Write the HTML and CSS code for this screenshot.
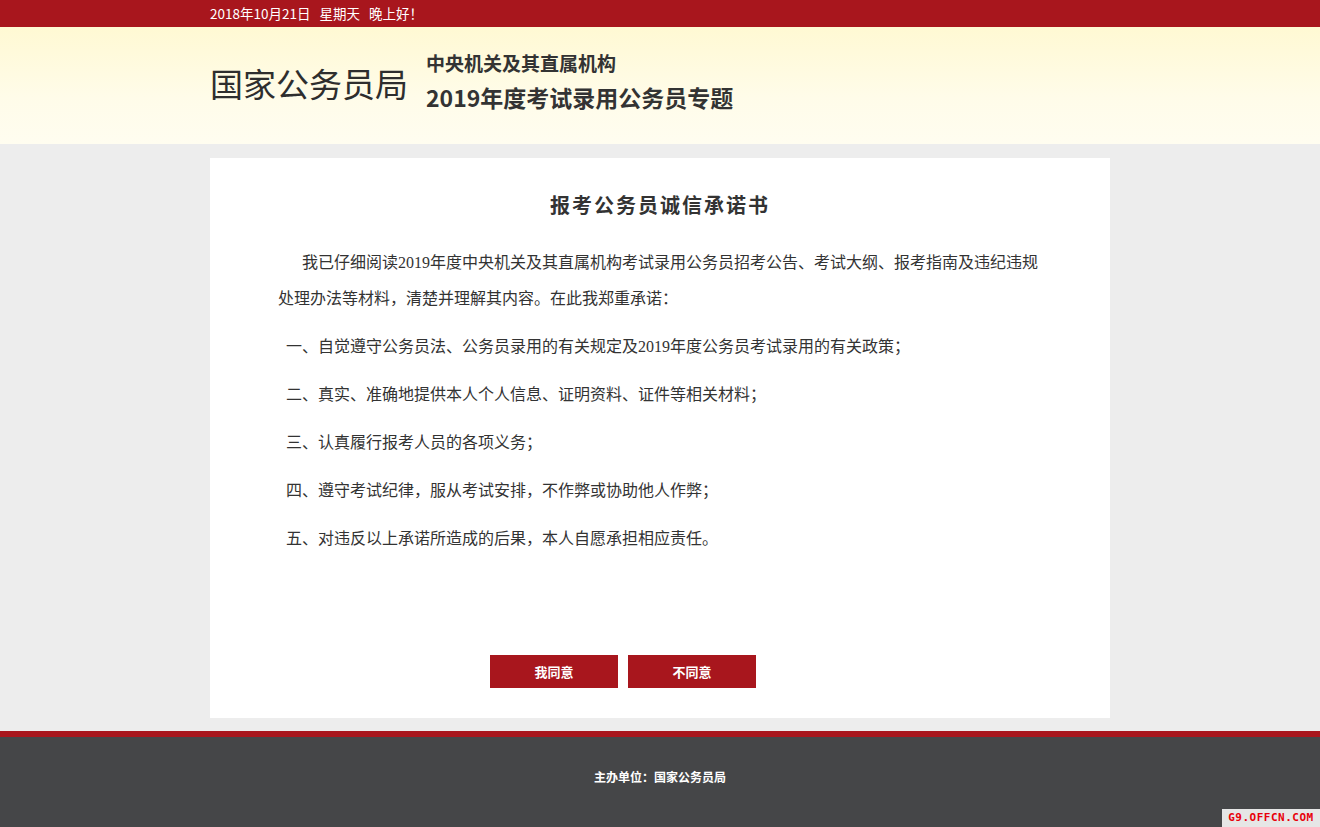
FILE: index.html
```html
<!DOCTYPE html>
<html lang="zh-CN">
<head>
<meta charset="utf-8">
<title>国家公务员局 - 2019年度考试录用公务员专题</title>
<link rel="stylesheet" href="styles.css">
</head>
<body>
<div class="topbar">
  <div class="wrap"><span>2018年10月21日</span><span class="gap">星期天</span><span class="gap">晚上好！</span></div>
</div>
<div class="header">
  <div class="wrap header-inner">
    <div class="site-name">国家公务员局</div>
    <div class="subtitle">
      <div class="sub1">中央机关及其直属机构</div>
      <div class="sub2">2019年度考试录用公务员专题</div>
    </div>
  </div>
</div>
<div class="main">
  <div class="card">
    <h1 class="title">报考公务员诚信承诺书</h1>
    <div class="content">
      <p class="intro">我已仔细阅读2019年度中央机关及其直属机构考试录用公务员招考公告、考试大纲、报考指南及违纪违规处理办法等材料，清楚并理解其内容。在此我郑重承诺：</p>
      <p class="item">一、自觉遵守公务员法、公务员录用的有关规定及2019年度公务员考试录用的有关政策；</p>
      <p class="item">二、真实、准确地提供本人个人信息、证明资料、证件等相关材料；</p>
      <p class="item">三、认真履行报考人员的各项义务；</p>
      <p class="item">四、遵守考试纪律，服从考试安排，不作弊或协助他人作弊；</p>
      <p class="item">五、对违反以上承诺所造成的后果，本人自愿承担相应责任。</p>
    </div>
    <div class="actions">
      <a class="btn" href="#">我同意</a>
      <a class="btn" href="#">不同意</a>
    </div>
  </div>
</div>
<div class="footer">主办单位：国家公务员局</div>
<div class="watermark">G9.OFFCN.COM</div>
</body>
</html>
```

FILE: styles.css
```css
html, body {
  margin: 0;
  padding: 0;
}
body {
  background: #ededed;
  font-family: "Noto Sans CJK SC", sans-serif;
  color: #333;
  position: relative;
  min-height: 827px;
}
.wrap {
  width: 900px;
  margin: 0 auto;
}
.topbar {
  background: #a8161d;
  height: 27px;
  color: #fff;
  font-size: 13.5px;
  line-height: 27px;
}
.topbar .gap {
  margin-left: 9px;
}
.header {
  height: 117px;
  background: linear-gradient(to bottom, #fff9d3 0%, #fffce9 60%, #fffdf0 100%);
}
.header-inner {
  display: flex;
  align-items: center;
  height: 117px;
}
.site-name {
  font-size: 33px;
  line-height: 40px;
  color: #2e2e2e;
  margin-top: -6px;
}
.subtitle {
  margin-left: 18px;
  display: flex;
  flex-direction: column;
  color: #333;
  font-weight: bold;
  margin-top: -9px;
}
.sub1 {
  font-size: 19px;
  line-height: 24px;
}
.sub2 {
  font-size: 23px;
  line-height: 30px;
  margin-top: 7px;
}
.main {
  padding: 14px 0 13px;
}
.card {
  width: 900px;
  height: 560px;
  box-sizing: border-box;
  margin: 0 auto;
  background: #fff;
  padding: 32px 68px 30px;
}
.title {
  margin: 0 0 25px;
  text-align: center;
  font-size: 20px;
  line-height: 30px;
  letter-spacing: 2px;
  font-weight: bold;
  color: #333;
}
.content {
  font-family: "Liberation Serif", "Noto Sans CJK SC", serif;
  font-size: 16px;
  line-height: 36px;
  color: #333;
}
.content p {
  margin: 0 0 12px;
}
.intro {
  text-indent: 24px;
}
.item {
  padding-left: 8px;
}
.actions {
  display: flex;
  gap: 10px;
  padding-left: 212px;
  margin-top: 98px;
}
.btn {
  display: block;
  width: 128px;
  height: 33px;
  line-height: 33px;
  background: #a8161d;
  color: #fff;
  text-align: center;
  font-size: 13px;
  font-weight: bold;
  text-decoration: none;
}
.footer {
  border-top: 6px solid #a8161d;
  background: #454648;
  height: 96px;
  box-sizing: border-box;
  padding-top: 31px;
  text-align: center;
  color: #fff;
  font-size: 12px;
  line-height: 18px;
  font-weight: bold;
}
.watermark {
  position: absolute;
  right: 0;
  bottom: 0;
  width: 98px;
  height: 18px;
  background: #e6e6e6;
  color: #e8000b;
  font-family: "DejaVu Sans Mono", monospace;
  font-weight: bold;
  font-size: 11px;
  line-height: 18px;
  text-align: center;
  letter-spacing: 0.5px;
}
```
